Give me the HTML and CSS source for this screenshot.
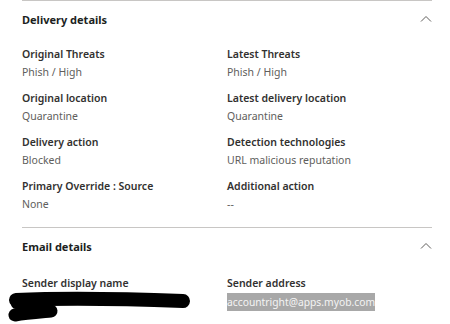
FILE: index.html
```html
<!DOCTYPE html>
<html lang="en">
<head>
    <meta charset="UTF-8">
    <meta name="viewport" content="width=device-width, initial-scale=1.0">
    <title>Message details</title>
    <link rel="stylesheet" href="styles.css">
</head>
<body>
    <div class="panel">
        <section class="section">
            <div class="section-head">
                <h3>Delivery details</h3>
                <svg class="chevron" width="12" height="8" viewBox="0 0 12 8"><path d="M1 6.5 L6 1.5 L11 6.5" fill="none" stroke="#605e5c" stroke-width="1"/></svg>
            </div>
            <div class="fields">
                <div class="field">
                    <div class="label">Original Threats</div>
                    <div class="value">Phish / High</div>
                </div>
                <div class="field">
                    <div class="label">Latest Threats</div>
                    <div class="value">Phish / High</div>
                </div>
                <div class="field">
                    <div class="label">Original location</div>
                    <div class="value">Quarantine</div>
                </div>
                <div class="field">
                    <div class="label">Latest delivery location</div>
                    <div class="value">Quarantine</div>
                </div>
                <div class="field">
                    <div class="label">Delivery action</div>
                    <div class="value">Blocked</div>
                </div>
                <div class="field">
                    <div class="label">Detection technologies</div>
                    <div class="value">URL malicious reputation</div>
                </div>
                <div class="field">
                    <div class="label">Primary Override : Source</div>
                    <div class="value">None</div>
                </div>
                <div class="field">
                    <div class="label">Additional action</div>
                    <div class="value">--</div>
                </div>
            </div>
        </section>

        <section class="section">
            <div class="section-head">
                <h3>Email details</h3>
                <svg class="chevron" width="12" height="8" viewBox="0 0 12 8"><path d="M1 6.5 L6 1.5 L11 6.5" fill="none" stroke="#605e5c" stroke-width="1"/></svg>
            </div>
            <div class="fields fields-email">
                <div class="field">
                    <div class="label">Sender display name</div>
                    <div class="value">&nbsp;</div>
                    <svg class="scribble" width="200" height="40" viewBox="0 0 200 40">
                        <path d="M16 9 C60 7 130 8 183 10" stroke="#000" stroke-width="14" stroke-linecap="round" fill="none"/>
                        <path d="M15 24 C26 22 40 21 51 20" stroke="#000" stroke-width="13" stroke-linecap="round" fill="none"/>
                        <path d="M16 13 L40 19" stroke="#000" stroke-width="10" stroke-linecap="round" fill="none"/>
                    </svg>
                </div>
                <div class="field">
                    <div class="label">Sender address</div>
                    <div class="value value-email"><span class="selected">accountright@apps.myob.com</span></div>
                </div>
            </div>
        </section>
    </div>
</body>
</html>
```

FILE: styles.css
```css
body {
    margin: 0;
    background-color: #fff;
    font-family: "Noto Sans", "Open Sans", sans-serif;
    color: #323130;
}

.panel {
    padding: 0 18px 0 22px;
}

.section {
    border-top: 1px solid #c8c6c4;
    padding-bottom: 6px;
}

.section-head {
    height: 36px;
    display: flex;
    align-items: center;
    justify-content: space-between;
}

.section-head h3 {
    margin: 0;
    font-size: 11px;
    font-weight: 700;
    color: #201f1e;
}

.fields {
    display: grid;
    grid-template-columns: 205px 1fr;
    padding-top: 8px;
}

.fields-email {
    padding-top: 10px;
}

.field {
    position: relative;
    margin-bottom: 8px;
}

.label {
    font-size: 10.5px;
    font-weight: 600;
    line-height: 18px;
    color: #323130;
}

.value {
    font-size: 10.5px;
    line-height: 18px;
    color: #605e5c;
}

.value-email {
    margin-top: 1px;
    font-size: 10.3px;
}

.selected {
    background-color: #a8a8a8;
    color: #f4f4f4;
    padding: 2px 0;
}

.scribble {
    position: absolute;
    left: -22px;
    top: 17px;
}
```
